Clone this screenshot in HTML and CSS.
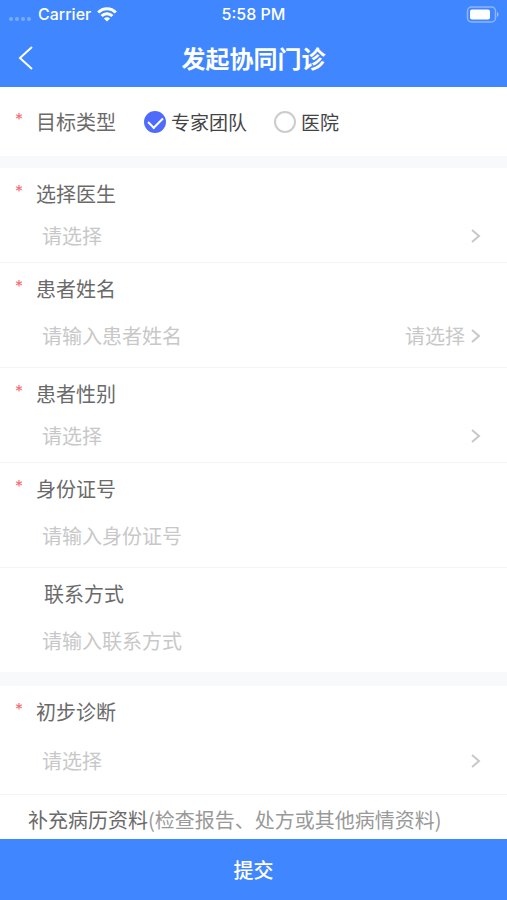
FILE: index.html
```html
<!DOCTYPE html>
<html lang="zh-CN">
<head>
    <meta charset="UTF-8">
    <meta name="viewport" content="width=device-width, initial-scale=1.0">
    <title>发起协同门诊</title>
    <link rel="stylesheet" href="styles.css">
</head>
<body>

<header class="header">
    <div class="status-bar">
        <div class="status-left">
            <svg class="signal" width="24" height="6" viewBox="0 0 24 6" fill="#fff">
                <circle cx="3" cy="3" r="2"/>
                <circle cx="9" cy="3" r="2"/>
                <circle cx="15" cy="3" r="2"/>
                <circle cx="21" cy="3" r="2"/>
            </svg>
            <span>Carrier</span>
            <svg width="20" height="15" viewBox="0 0 20 15" fill="none" stroke="#fff" stroke-width="3">
                <path d="M1.2 5.6C6 .4 14 .4 18.8 5.6"/>
                <path d="M4.6 9C7.6 5.9 12.4 5.9 15.4 9"/>
                <path d="M10 14.6L6.9 11.5C8.6 9.9 11.4 9.9 13.1 11.5Z" fill="#fff" stroke="none"/>
            </svg>
        </div>
        <span>5:58 PM</span>
        <div class="status-right">
            <svg width="34" height="17" viewBox="0 0 34 17">
                <rect x="2.5" y="1" width="28" height="15" rx="4" fill="none" stroke="#fff" stroke-opacity=".4" stroke-width="1.5"/>
                <rect x="5" y="3.5" width="20" height="10" rx="2" fill="#fff"/>
                <path d="M32 6C34 7 34 10 32 11Z" fill="#fff" fill-opacity=".5"/>
            </svg>
        </div>
    </div>
    <div class="nav-bar">
        <a href="#" class="back" aria-label="返回">
            <svg width="16" height="24" viewBox="0 0 16 24" fill="none" stroke="#fff" stroke-width="2">
                <path d="M15 1L3 12L15 23"/>
            </svg>
        </a>
        <h1>发起协同门诊</h1>
    </div>
</header>

<form class="form" id="clinicForm">
    <section class="group">
        <div class="target" role="radiogroup" aria-labelledby="targetLabel">
            <span class="label" id="targetLabel"><i class="required">*</i>目标类型</span>
            <label class="radio"><input type="radio" name="target" value="team" checked>专家团队</label>
            <label class="radio"><input type="radio" name="target" value="hospital">医院</label>
        </div>
    </section>

    <section class="group">
        <div class="item">
            <label class="label" for="doctor"><i class="required">*</i>选择医生</label>
            <div class="control">
                <select id="doctor"><option value="">请选择</option></select>
                <svg class="arrow" viewBox="0 0 10 14"><path d="M1 1L8 7L1 13"/></svg>
            </div>
        </div>
        <div class="item">
            <label class="label" for="patientName"><i class="required">*</i>患者姓名</label>
            <div class="control control-tall">
                <input type="text" id="patientName" placeholder="请输入患者姓名">
                <button type="button" class="pick">请选择</button>
                <svg class="arrow" viewBox="0 0 10 14"><path d="M1 1L8 7L1 13"/></svg>
            </div>
        </div>
        <div class="item">
            <label class="label" for="gender"><i class="required">*</i>患者性别</label>
            <div class="control">
                <select id="gender"><option value="">请选择</option><option>男</option><option>女</option></select>
                <svg class="arrow" viewBox="0 0 10 14"><path d="M1 1L8 7L1 13"/></svg>
            </div>
        </div>
        <div class="item">
            <label class="label" for="idCard"><i class="required">*</i>身份证号</label>
            <div class="control control-tall">
                <input type="text" id="idCard" placeholder="请输入身份证号">
            </div>
        </div>
        <div class="item">
            <label class="label label-optional" for="phone">联系方式</label>
            <div class="control control-tall">
                <input type="tel" id="phone" placeholder="请输入联系方式">
            </div>
        </div>
    </section>

    <section class="group">
        <div class="item">
            <label class="label" for="diagnosis"><i class="required">*</i>初步诊断</label>
            <div class="control control-diagnosis">
                <select id="diagnosis"><option value="">请选择</option></select>
                <svg class="arrow" viewBox="0 0 10 14"><path d="M1 1L8 7L1 13"/></svg>
            </div>
        </div>
        <p class="records">补充病历资料<span>(检查报告、处方或其他病情资料)</span></p>
    </section>
</form>

<button type="submit" class="submit" form="clinicForm">提交</button>

</body>
</html>
```

FILE: styles.css
```css
* {
    box-sizing: border-box;
}

body {
    margin: 0;
    min-height: 100vh;
    display: flex;
    flex-direction: column;
    background-color: #fff;
    color: #6a6a6a;
    font-family: "Noto Sans CJK SC", sans-serif;
    font-size: 20px;
    line-height: 30px;
}

input,
select,
button {
    margin: 0;
    padding: 0;
    border: none;
    background: none;
    color: inherit;
    font: inherit;
}

/* Header */
.header {
    background-color: #4086ff;
    color: #fff;
}

.status-bar {
    display: grid;
    grid-template-columns: 1fr auto 1fr;
    align-items: center;
    height: 28px;
    padding: 0 8px;
    font-family: Inter, sans-serif;
    font-size: 16px;
    font-weight: 500;
    line-height: 28px;
}

.status-left {
    display: flex;
    align-items: center;
    gap: 6px;
}

.signal {
    align-self: flex-end;
    margin-bottom: 6px;
    opacity: 0.3;
}

.status-right {
    display: flex;
    justify-content: flex-end;
}

.nav-bar {
    display: grid;
    grid-template-columns: 1fr auto 1fr;
    align-items: center;
    height: 59px;
    padding: 0 17px;
}

.back {
    display: flex;
}

.nav-bar h1 {
    margin: 0;
    font-size: 24px;
    font-weight: 700;
}

/* Form */
.form {
    flex: 1;
}

.group + .group {
    border-top: 14px solid #f7f9fa;
}

.group:nth-child(2) {
    border-top-width: 12px;
}

.label {
    display: flex;
    padding-left: 15px;
}

.label-optional {
    padding-left: 44px;
}

.required {
    width: 21px;
    color: #f56c6c;
    font-family: Inter, sans-serif;
    font-size: 16px;
    font-style: normal;
    line-height: 24px;
}

.target {
    display: flex;
    align-items: center;
    height: 69px;
}

.radio {
    display: flex;
    align-items: center;
    gap: 5px;
    margin-left: 28px;
    color: #444;
    font-size: 19px;
}

.radio + .radio {
    margin-left: 27px;
}

.radio input {
    appearance: none;
    display: flex;
    justify-content: center;
    width: 22px;
    height: 22px;
    border: 2px solid #ccc;
    border-radius: 50%;
}

.radio input:checked {
    border-color: #4f6bfb;
    background-color: #4f6bfb;
}

.radio input:checked::after {
    content: "";
    width: 7px;
    height: 12px;
    margin-top: 1px;
    border: solid #fff;
    border-width: 0 2px 2px 0;
    transform: rotate(45deg);
}

.item {
    padding-top: 11px;
    border-bottom: 1px solid #f4f4f4;
}

.group:nth-child(2) .item:last-child {
    border-bottom: none;
}

.control {
    display: flex;
    align-items: center;
    height: 53px;
    padding: 0 26px 0 42px;
    color: #c8c8c8;
}

.control-tall {
    height: 63px;
}

.control-diagnosis {
    height: 67px;
}

.control input,
.control select {
    flex: 1;
    min-width: 0;
    height: 40px;
    appearance: none;
    outline: none;
}

.control input {
    color: #6a6a6a;
}

.control input::placeholder {
    color: #c8c8c8;
}

.arrow {
    width: 10px;
    height: 14px;
    margin-left: 6px;
    fill: none;
    stroke: #c8c8c8;
    stroke-width: 2;
}

.records {
    margin: 0;
    padding: 10px 28px 4px;
}

.records span {
    color: #999;
}

.submit {
    position: sticky;
    bottom: 0;
    flex-shrink: 0;
    height: 61px;
    background-color: #4086ff;
    color: #fff;
    font-weight: 500;
}
```
